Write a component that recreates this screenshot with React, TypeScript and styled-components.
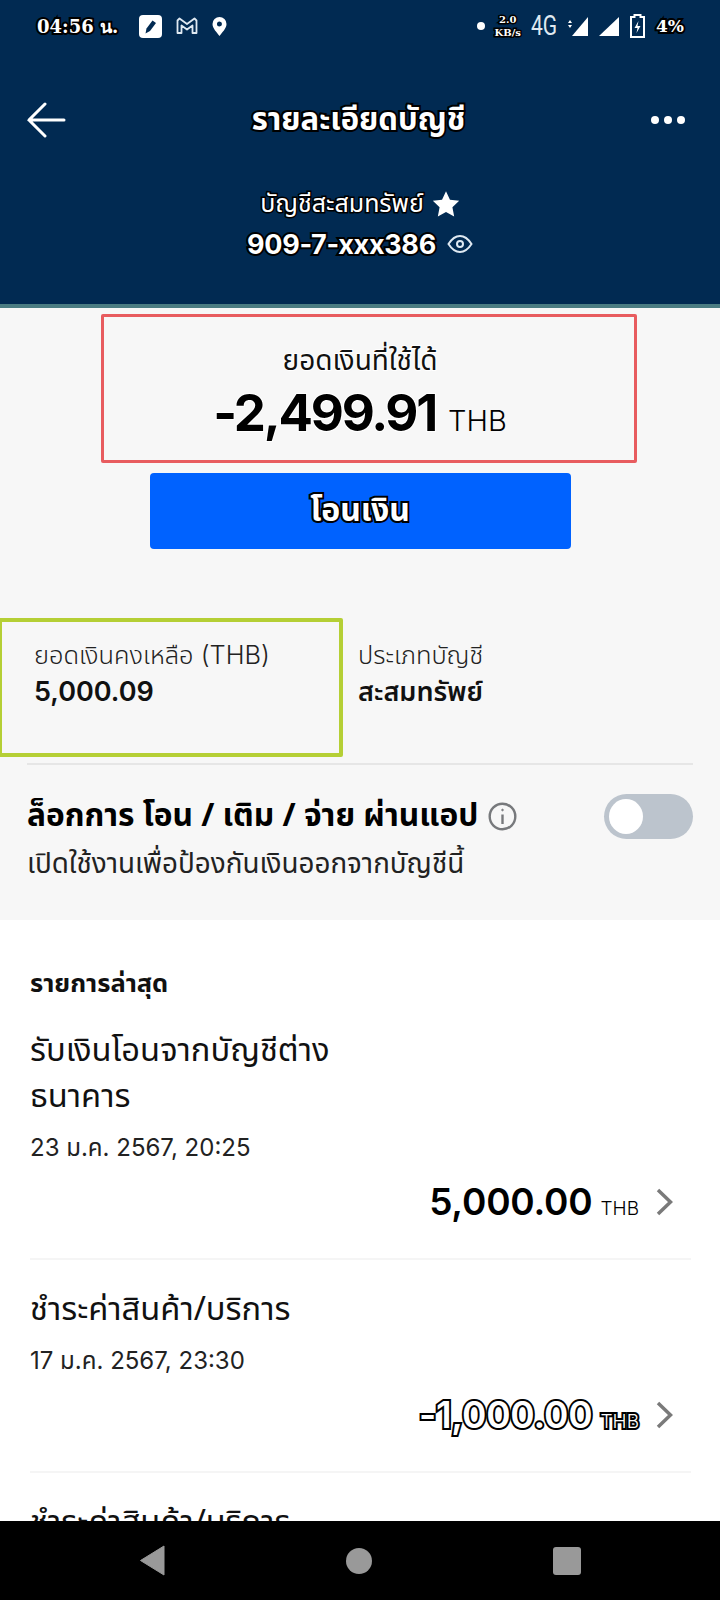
import React from 'react'
import styled, { createGlobalStyle, css } from 'styled-components'

const thai = `"Noto Sans", "Noto Sans Thai", "Open Sans", "Liberation Sans", sans-serif`
const latin = `"Inter", ${thai}`

const GlobalStyle = createGlobalStyle`
  html, body {
    margin: 0;
    padding: 0;
    background: #fff;
  }
  * {
    box-sizing: border-box;
  }
`

const outlineDark = css`
  -webkit-text-stroke: 4px #000;
  paint-order: stroke fill;
`

const halo = css`
  -webkit-text-stroke: 2px #fff;
  paint-order: stroke fill;
`

const Phone = styled.div`
  width: 720px;
  height: 1600px;
  display: flex;
  flex-direction: column;
  overflow: hidden;
  font-family: ${thai};
  color: #111;
`

const Content = styled.div`
  flex: 1;
  min-height: 0;
  overflow: hidden;
`

const Header = styled.header`
  height: 308px;
  background: #012a52;
  border-bottom: 4px solid #4a7c82;
  color: #fff;
  display: flex;
  flex-direction: column;
`

const StatusBar = styled.div`
  height: 52px;
  padding: 0 36px 0 37px;
  display: flex;
  align-items: center;
  justify-content: space-between;
`

const StatusGroup = styled.div<{ $gap: number }>`
  display: flex;
  align-items: center;
  gap: ${({ $gap }) => $gap}px;
`

const StatusTime = styled.span`
  font-family: "DejaVu Serif", "Noto Sans", serif;
  font-size: 18px;
  font-weight: 700;
  margin-right: 7px;
  ${outlineDark}
`

const StatusPercent = styled.span`
  font-family: "DejaVu Serif", serif;
  font-size: 17px;
  font-weight: 700;
  ${outlineDark}
`

const NetSpeed = styled.span`
  font-family: "DejaVu Serif", serif;
  font-weight: 700;
  font-size: 10px;
  line-height: 13px;
  text-align: center;
  margin: 0 -1px;
  -webkit-text-stroke: 3px #000;
  paint-order: stroke fill;
`

const NetType = styled.span`
  font-family: "Roboto", sans-serif;
  font-size: 27px;
  color: #dfe8f0;
  display: inline-block;
  width: 26px;
  transform: scaleX(0.78);
  transform-origin: left center;
`

const NavRow = styled.div`
  height: 76px;
  margin-top: 30px;
  padding: 0 26px;
  display: flex;
  align-items: center;
  justify-content: space-between;
`

const Title = styled.h1`
  margin: 0;
  font-size: 31px;
  font-weight: 700;
  ${outlineDark}
`

const Dots = styled.div`
  display: flex;
  gap: 5px;
  padding-right: 9px;
`

const Dot = styled.span`
  width: 8px;
  height: 8px;
  border-radius: 50%;
  background: #fff;
`

const AccountBlock = styled.div`
  display: flex;
  flex-direction: column;
  align-items: center;
  margin-top: 26px;
`

const AccountLine = styled.div`
  display: flex;
  align-items: center;
  gap: 8px;
  height: 40px;
`

const AccountName = styled.span`
  font-size: 25px;
  -webkit-text-stroke: 3px #000;
  paint-order: stroke fill;
`

const AccountNumber = styled.span`
  font-size: 27px;
  font-weight: 700;
  font-family: ${latin};
  letter-spacing: -0.3px;
  margin-right: 3px;
  ${outlineDark}
`

const Summary = styled.section`
  background: #f7f7f7;
  height: 612px;
  display: flex;
  flex-direction: column;
  align-items: center;
  padding-top: 6px;
`

const BalanceBox = styled.div`
  width: 536px;
  height: 149px;
  margin-left: 18px;
  border: 3px solid #e85c5f;
  border-radius: 2px;
  display: flex;
  flex-direction: column;
  align-items: center;
  padding: 22px 18px 0 0;
`

const BalanceLabel = styled.div`
  font-size: 28px;
  line-height: 40px;
  ${halo}
`

const BalanceRow = styled.div`
  display: flex;
  align-items: baseline;
  gap: 12px;
  margin-top: 3px;
  color: #000;
`

const BalanceValue = styled.span`
  font-family: "Inter", sans-serif;
  font-size: 51px;
  line-height: 62px;
  font-weight: 700;
  letter-spacing: -2.2px;
  ${halo}
`

const BalanceUnit = styled.span`
  font-family: "Inter", sans-serif;
  font-size: 29px;
  font-weight: 300;
`

const TransferButton = styled.button`
  width: 421px;
  height: 76px;
  margin-top: 10px;
  background: #0062ff;
  border: none;
  border-radius: 4px;
  color: #fff;
  font-family: ${thai};
  font-size: 32px;
  font-weight: 700;
  ${outlineDark}
`

const Details = styled.div`
  width: 100%;
  margin-top: 69px;
  display: flex;
  gap: 15px;
`

const GreenBox = styled.div`
  width: 343px;
  height: 139px;
  border: 4px solid #b5cf35;
  border-left-width: 2px;
  border-radius: 0 2px 2px 0;
  padding: 16px 0 0 32px;
`

const TypeBlock = styled.div`
  padding-top: 20px;
`

const DetailLabel = styled.div`
  font-family: ${latin};
  font-size: 25.4px;
  font-weight: 300;
  line-height: 34px;
  color: #222;
`

const DetailValue = styled.div`
  font-family: ${latin};
  font-size: 27px;
  line-height: 40px;
  font-weight: 600;
  color: #111;
`

const Divider = styled.hr`
  align-self: stretch;
  margin: 6px 27px 0;
  border: none;
  height: 2px;
  background: #e6e6e6;
`

const LockRow = styled.div`
  width: 100%;
  padding: 30px 27px 0;
  display: flex;
  justify-content: space-between;
  align-items: flex-start;
`

const LockTitleLine = styled.div`
  display: flex;
  align-items: center;
  gap: 10px;
  height: 42px;
`

const LockTitle = styled.div`
  font-size: 31.7px;
  font-weight: 700;
  color: #000;
  white-space: nowrap;
`

const LockNote = styled.div`
  font-size: 27.8px;
  line-height: 40px;
  margin-top: 5px;
  color: #222;
  white-space: nowrap;
`

const Toggle = styled.div`
  width: 89px;
  height: 45px;
  margin-top: -1px;
  flex-shrink: 0;
  border-radius: 23px;
  background: #bcc4cd;
  padding: 5px 5px;
`

const ToggleKnob = styled.div`
  width: 34px;
  height: 35px;
  border-radius: 50%;
  background: #fff;
`

const Recent = styled.section`
  background: #fff;
  padding: 42px 29px 0 30px;
`

const RecentHeading = styled.h2`
  margin: 0 0 24px;
  font-size: 25.5px;
  line-height: 40px;
  font-weight: 700;
`

const Item = styled.article`
  padding-bottom: 34px;
  margin-bottom: 25px;
  border-bottom: 2px solid #f5f5f5;
`

const ItemTitle = styled.div`
  width: 340px;
  font-size: 32.7px;
  line-height: 46px;
  color: #111;
`

const ItemDate = styled.div`
  font-family: ${latin};
  font-size: 24px;
  line-height: 34px;
  margin-top: 13px;
  color: #222;
`

const AmountRow = styled.div`
  display: flex;
  justify-content: flex-end;
  align-items: center;
  gap: 17px;
  margin-top: 14px;
  padding-right: 18px;
`

const Amount = styled.div<{ $outlined?: boolean }>`
  display: flex;
  align-items: baseline;
  gap: 8px;
  color: #000;
  ${({ $outlined }) =>
    $outlined &&
    css`
      color: #fff;
      -webkit-text-stroke: 4px #000;
      paint-order: stroke fill;
    `}
`

const AmountValue = styled.span`
  font-family: "Inter", sans-serif;
  font-size: 37px;
  font-weight: 600;
  letter-spacing: -0.2px;
`

const AmountUnit = styled.span`
  font-family: "Inter", sans-serif;
  font-size: 19px;
  font-weight: 300;
`

const BottomNav = styled.nav`
  height: 79px;
  background: #000;
  display: flex;
  align-items: center;
  gap: 181px;
  padding-left: 139px;
`

const Chevron = () => (
  <svg width="17" height="28" viewBox="0 0 17 28" fill="none" stroke="#7a7a7a" strokeWidth="3.5">
    <path d="m2 2 12.500 12L2 26" />
  </svg>
)

const App = () => (
  <Phone>
    <GlobalStyle />
    <Content>
      <Header>
        <StatusBar>
          <StatusGroup $gap={14}>
            <StatusTime>04:56 น.</StatusTime>
            <svg width="23" height="23" viewBox="0 0 23 23">
              <rect width="23" height="23" rx="4" fill="#fff" />
              <path d="M6.500 18.500l1-5 6-8 3.500 2.600-6 8-4.500 2.400Z" fill="#012a52" />
            </svg>
            <svg width="22" height="18" viewBox="0 0 22 18" fill="none" stroke="#dfe9f2" strokeWidth="1.8" strokeLinejoin="round">
              <path d="M1.500 16V3.500L3.500 1.500 11 7l7.500-5.500 2 2V16h-4V8.500L11 12.500l-5.500-4V16h-4Z" />
            </svg>
            <svg width="15" height="19" viewBox="0 0 15 19">
              <path fillRule="evenodd" d="M7.500 0a7 7 0 0 1 7 7c0 4.500-4.500 8.500-7 12-2.500-3.500-7-7.500-7-12a7 7 0 0 1 7-7Zm0 4.500a2.500 2.500 0 1 0 0 5 2.500 2.500 0 0 0 0-5Z" fill="#fff" />
            </svg>
          </StatusGroup>
          <StatusGroup $gap={11}>
            <Dot />
            <NetSpeed>
              2.0
              <br />
              KB/s
            </NetSpeed>
            <NetType>4G</NetType>
            <svg width="20" height="19" viewBox="0 0 20 19" fill="#fff">
              <path d="M20 0v19H4L20 0Z" />
              <path d="M0 6l2-3 2 3H0Zm0 2h4l-2 3-2-3Z" />
            </svg>
            <svg width="20" height="19" viewBox="0 0 20 19" fill="#fff">
              <path d="M20 0v19H0L20 0Z" />
            </svg>
            <svg width="15" height="24" viewBox="0 0 15 24">
              <path d="M4.500 1h6v2H14v20H1V3h3.500V1Z" fill="none" stroke="#fff" strokeWidth="2" />
              <path d="M8.500 7l-4 7h3l-1 5 4-7h-3l1-5Z" fill="#fff" />
            </svg>
            <StatusPercent>4%</StatusPercent>
          </StatusGroup>
        </StatusBar>
        <NavRow>
          <svg width="40" height="36" viewBox="0 0 40 36" fill="none" stroke="#fff" strokeWidth="3" strokeLinecap="round">
            <path d="M38 18H3M19 2 3 18l16 16" />
          </svg>
          <Title>รายละเอียดบัญชี</Title>
          <Dots>
            <Dot />
            <Dot />
            <Dot />
          </Dots>
        </NavRow>
        <AccountBlock>
          <AccountLine>
            <AccountName>บัญชีสะสมทรัพย์</AccountName>
            <svg width="28" height="28" viewBox="0 0 24 24" fill="#fff">
              <path d="m12 1 3.400 7.300 7.900 1-5.800 5.500 1.500 7.900-7-3.900-7 3.900 1.500-7.900L.7 9.300l7.900-1L12 1Z" />
            </svg>
          </AccountLine>
          <AccountLine>
            <AccountNumber>909-7-xxx386</AccountNumber>
            <svg width="26" height="20" viewBox="0 0 26 20" fill="none" stroke="#dfe9f2" strokeWidth="2">
              <path d="M1.500 10C5 4.500 8.700 2 13 2s8 2.500 11.500 8C21 15.500 17.300 18 13 18S5 15.500 1.500 10Z" />
              <circle cx="13" cy="10" r="3" />
            </svg>
          </AccountLine>
        </AccountBlock>
      </Header>
      <Summary>
        <BalanceBox>
          <BalanceLabel>ยอดเงินที่ใช้ได้</BalanceLabel>
          <BalanceRow>
            <BalanceValue>-2,499.91</BalanceValue>
            <BalanceUnit>THB</BalanceUnit>
          </BalanceRow>
        </BalanceBox>
        <TransferButton>โอนเงิน</TransferButton>
        <Details>
          <GreenBox>
            <DetailLabel>ยอดเงินคงเหลือ (THB)</DetailLabel>
            <DetailValue>5,000.09</DetailValue>
          </GreenBox>
          <TypeBlock>
            <DetailLabel>ประเภทบัญชี</DetailLabel>
            <DetailValue>สะสมทรัพย์</DetailValue>
          </TypeBlock>
        </Details>
        <Divider />
        <LockRow>
          <div>
            <LockTitleLine>
              <LockTitle>ล็อกการ โอน / เติม / จ่าย ผ่านแอป</LockTitle>
              <svg width="29" height="29" viewBox="0 0 29 29" fill="none" stroke="#77797c" strokeWidth="2.4">
                <circle cx="14.500" cy="14.500" r="12.800" />
                <path d="M14.500 12.500V22" />
                <circle cx="14.500" cy="8" r="0.800" fill="#77797c" strokeWidth="1" />
              </svg>
            </LockTitleLine>
            <LockNote>เปิดใช้งานเพื่อป้องกันเงินออกจากบัญชีนี้</LockNote>
          </div>
          <Toggle>
            <ToggleKnob />
          </Toggle>
        </LockRow>
      </Summary>
      <Recent>
        <RecentHeading>รายการล่าสุด</RecentHeading>
        <Item>
          <ItemTitle>รับเงินโอนจากบัญชีต่างธนาคาร</ItemTitle>
          <ItemDate>23 ม.ค. 2567, 20:25</ItemDate>
          <AmountRow>
            <Amount>
              <AmountValue>5,000.00</AmountValue>
              <AmountUnit>THB</AmountUnit>
            </Amount>
            <Chevron />
          </AmountRow>
        </Item>
        <Item>
          <ItemTitle>ชำระค่าสินค้า/บริการ</ItemTitle>
          <ItemDate>17 ม.ค. 2567, 23:30</ItemDate>
          <AmountRow>
            <Amount $outlined>
              <AmountValue>-1,000.00</AmountValue>
              <AmountUnit>THB</AmountUnit>
            </Amount>
            <Chevron />
          </AmountRow>
        </Item>
        <ItemTitle>ชำระค่าสินค้า/บริการ</ItemTitle>
      </Recent>
    </Content>
    <BottomNav>
      <svg width="26" height="31" viewBox="0 0 26 31" fill="#999">
        <path d="M25 1v29L1.500 15.500 25 1Z" stroke="#999" strokeLinejoin="round" />
      </svg>
      <svg width="26" height="26" viewBox="0 0 26 26" fill="#999">
        <circle cx="13" cy="13" r="13" />
      </svg>
      <svg width="28" height="28" viewBox="0 0 28 28" fill="#999">
        <rect width="28" height="28" rx="3" />
      </svg>
    </BottomNav>
  </Phone>
)

export default App
